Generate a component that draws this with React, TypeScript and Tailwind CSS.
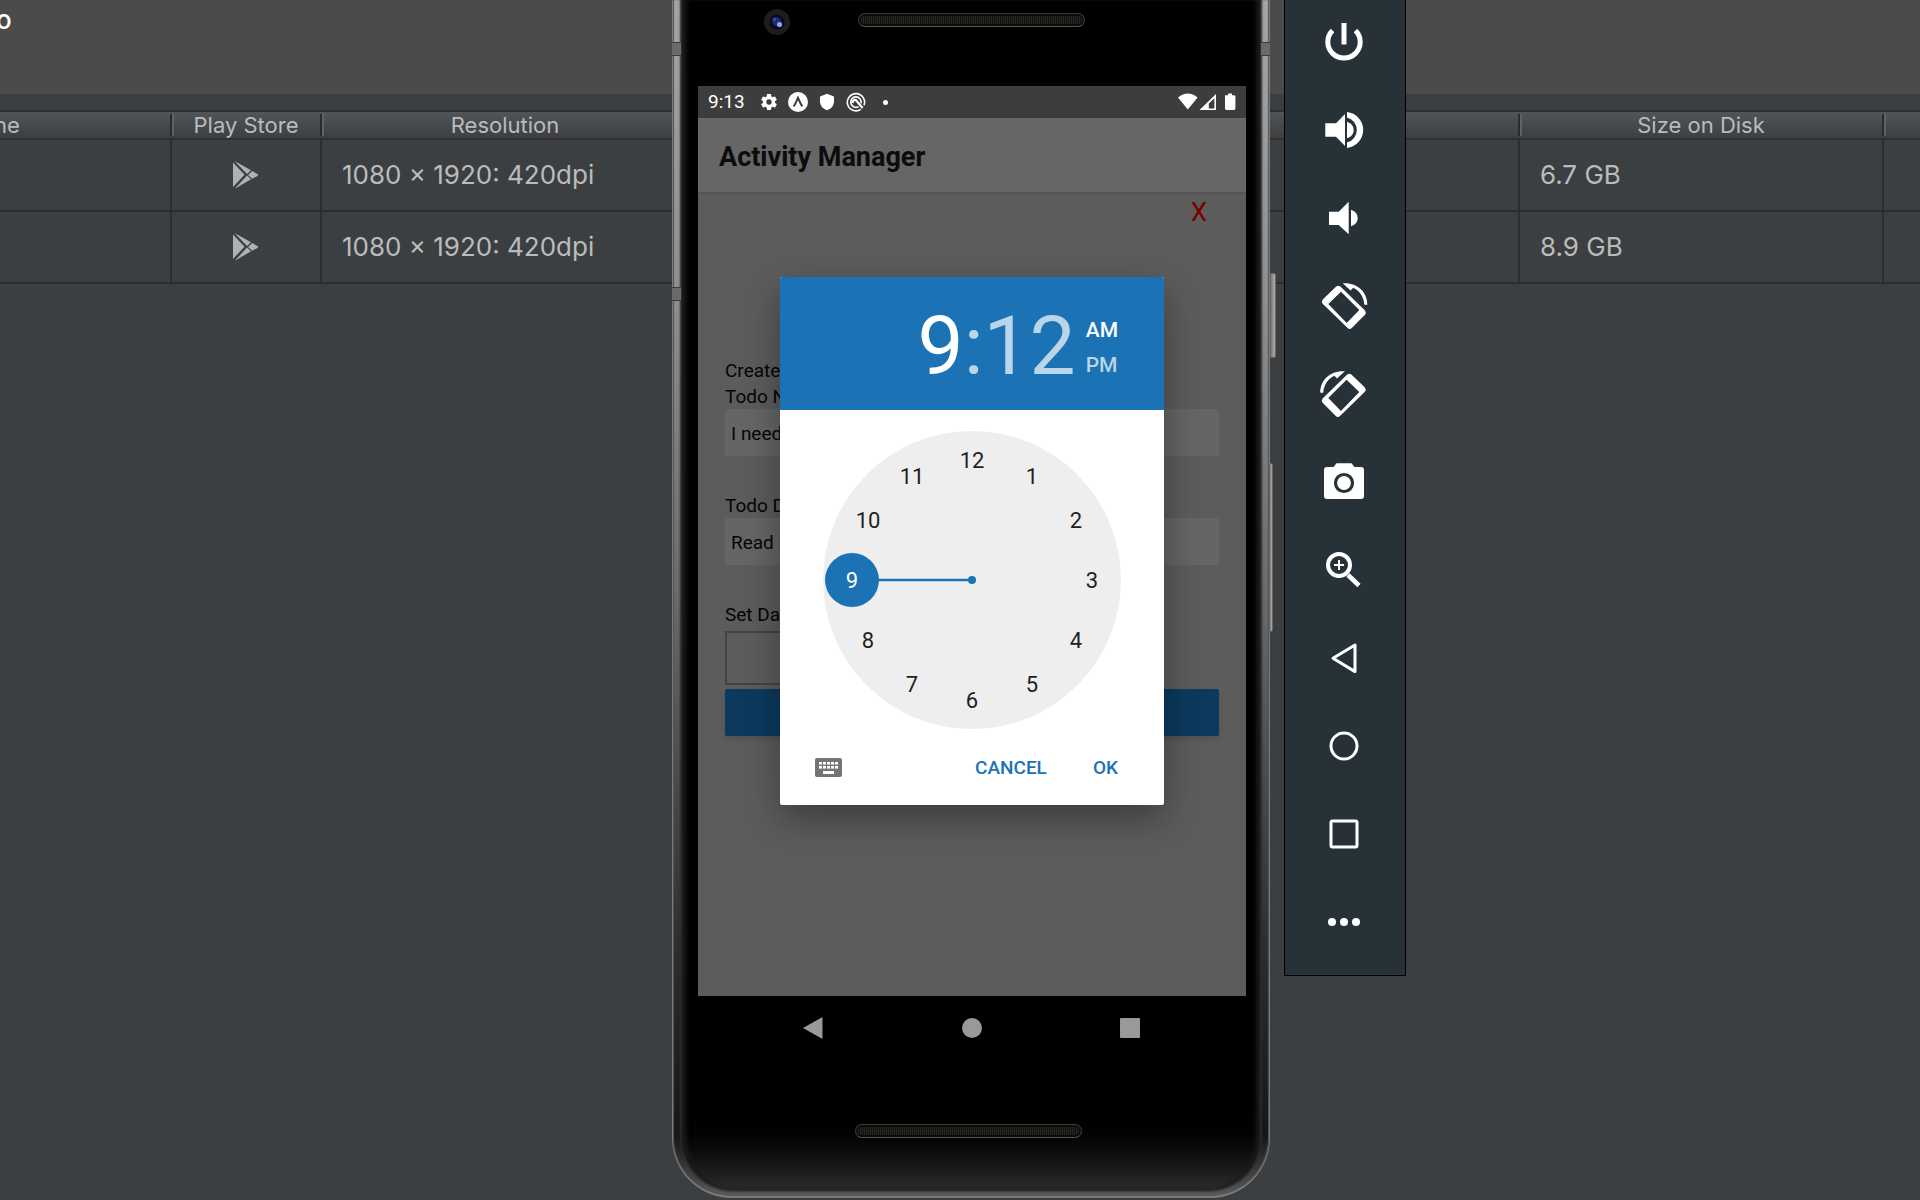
import React from "react";

const BLUE = "#1b72b4";

const devices = [
  { resolution: "1080 × 1920: 420dpi", size: "6.7 GB" },
  { resolution: "1080 × 1920: 420dpi", size: "8.9 GB" },
];

function PlayStoreIcon() {
  return (
    <svg width="28" height="28" viewBox="0 0 28 28" className="mx-auto" fill="#afb1b3" aria-label="Play Store available">
      <path d="M1 1.5 L12.5 13.7 L1 26 Z" />
      <path d="M2.5 0 L19 9.3 L15 13 Z" />
      <path d="M2.5 28 L19 18.3 L15 14.6 Z" />
      <path d="M20.2 10.1 L25.5 13.1 Q26.7 14 25.5 14.9 L20.2 17.7 L16 13.9 Z" />
    </svg>
  );
}

function HeaderCell({ children, last }: { children?: React.ReactNode; last?: boolean }) {
  return (
    <th scope="col" className="border-y-2 border-[#2f3133] p-0 font-normal">
      <div className="flex h-[26px] items-center">
        <div className="flex-1 overflow-hidden text-center text-[22px] leading-[26px] whitespace-nowrap">{children}</div>
        {!last && <span className="-mr-0.5 h-[22px] w-1 border-x-2 border-l-[#2b2b2b] border-r-[#5f6366]" />}
      </div>
    </th>
  );
}

function DeviceTable() {
  return (
    <table className="w-full table-fixed border-separate border-spacing-0 text-[#bbbbbb]">
      <colgroup>
        <col className="w-[172px]" />
        <col className="w-[150px]" />
        <col className="w-[368px]" />
        <col />
        <col className="w-[364px]" />
        <col className="w-[36px]" />
      </colgroup>
      <thead>
        <tr className="bg-linear-to-b from-[#53575a] to-[#3b3d3f]">
          <HeaderCell>
            <span className="-ml-1.5 block text-left">ne</span>
          </HeaderCell>
          <HeaderCell>Play Store</HeaderCell>
          <HeaderCell>Resolution</HeaderCell>
          <HeaderCell />
          <HeaderCell>Size on Disk</HeaderCell>
          <HeaderCell last />
        </tr>
      </thead>
      <tbody className="[&_td]:h-[72px] [&_td]:border-b-2 [&_td]:border-[#2c2d2e]">
        {devices.map((d) => (
          <tr key={d.size} className="text-[26px] leading-8">
            <td className="border-r-2" />
            <td className="border-r-2">
              <PlayStoreIcon />
            </td>
            <td className="pl-5 whitespace-nowrap">{d.resolution}</td>
            <td className="border-r-2" />
            <td className="border-r-2 pl-5">{d.size}</td>
            <td />
          </tr>
        ))}
      </tbody>
    </table>
  );
}

const rotateShapes = (
  <>
    <path
      fillRule="evenodd"
      d="M2.7 17.6 L16.2 4.5 Q18.3 2.9 20.4 4.5 L45 28.6 Q46.6 30.7 45 32.8 L31.8 46 Q29.7 47.8 27.6 46 L2.7 21.8 Q1.2 19.7 2.7 17.6 Z M8.3 22 L26.7 41 L39.3 28 L21 9.7 Z"
    />
    <path d="M22.7 1.3 C36 0 47.6 9.5 47.3 22.7 H44.4 C43.6 14.6 39.6 8.8 33.2 5.8 L30.6 8.4 Z" />
  </>
);

const tools: { label: string; icon: React.ReactNode }[] = [
  {
    label: "Power",
    icon: (
      <g fill="none" stroke="#fff" strokeWidth="5">
        <path d="M12.5 12.5 A16.2 16.2 0 1 0 35.5 12.5" />
        <path d="M24 5 V26.5" />
      </g>
    ),
  },
  {
    label: "Volume up",
    icon: (
      <>
        <path d="M5.3 17.3 H16 L25 8 V40 L16 30.7 H5.3 Z" />
        <path d="M27 15.7 Q33.7 18 33.7 24 Q33.7 30 27 32.3 Z" />
        <path d="M27 6 A18.1 18.1 0 0 1 27 42 V36.6 A13 13 0 0 0 27 11.4 Z" />
      </>
    ),
  },
  {
    label: "Volume down",
    icon: (
      <>
        <path d="M9 17.7 H18.7 L28.7 7.7 V40.3 L18.7 31 H9 Z" />
        <path d="M31 15.7 Q37.7 18 37.7 24 Q37.7 30 31 32.3 Z" />
      </>
    ),
  },
  { label: "Rotate left", icon: rotateShapes },
  { label: "Rotate right", icon: <g transform="translate(47.6 0) scale(-1 1)">{rotateShapes}</g> },
  {
    label: "Take screenshot",
    icon: (
      <>
        <path d="M7 9 H13.5 L16.5 5.3 H31.5 L34.5 9 H41 Q44 9 44 12 V38 Q44 41 41 41 H7 Q4 41 4 38 V12 Q4 9 7 9 Z" />
        <circle cx="24" cy="25" r="8.5" fill="none" stroke="#263238" strokeWidth="3.2" />
      </>
    ),
  },
  {
    label: "Zoom",
    icon: (
      <g fill="none" stroke="#fff">
        <circle cx="19" cy="19" r="11" strokeWidth="4" />
        <path d="M19 14 V24 M14 19 H24" strokeWidth="2" />
        <path d="M28 29 L39 39.5" strokeWidth="4.5" />
      </g>
    ),
  },
  { label: "Back", icon: <path d="M13 24.3 L35 11 V37.6 Z" fill="none" stroke="#fff" strokeWidth="3" strokeLinejoin="round" /> },
  { label: "Home", icon: <circle cx="24" cy="24" r="13" fill="none" stroke="#fff" strokeWidth="3" /> },
  { label: "Overview", icon: <rect x="11" y="11" width="26" height="26" rx="1.5" fill="none" stroke="#fff" strokeWidth="3" /> },
  {
    label: "More",
    icon: (
      <>
        <circle cx="12" cy="24" r="4" />
        <circle cx="24" cy="24" r="4" />
        <circle cx="36" cy="24" r="4" />
      </>
    ),
  },
];

function EmulatorToolbar() {
  return (
    <div className="absolute -top-[3px] left-[1284px] flex w-[122px] flex-col border border-black bg-[#263238] pr-0.5 pb-[9px]">
      {tools.map((t) => (
        <button key={t.label} type="button" aria-label={t.label} className="flex h-22 items-center justify-center">
          <svg width="48" height="48" viewBox="0 0 48 48" fill="#fff">
            {t.icon}
          </svg>
        </button>
      ))}
    </div>
  );
}

function Speaker() {
  return (
    <div className="flex h-3.5 w-[227px] rounded-full border border-[#3c3c3a] border-b-[#56544f] bg-[#0c0b09] p-0.5">
      <div className="flex-1 rounded-full bg-[repeating-linear-gradient(90deg,#2a2823_0_1px,#12110e_1px_2px)]" />
    </div>
  );
}

function StatusBar() {
  return (
    <div className="flex h-8 items-center bg-[#3d3d3d] pr-2.5 pl-[10px] text-white">
      <span className="w-[46px] text-[19px] leading-8">9:13</span>
      <div className="flex">
        <span className="flex w-[29px] justify-center">
          <svg width="20" height="20" viewBox="0 0 24 24" fill="#fff">
            <path d="M19.14 12.94c.04-.3.06-.61.06-.94 0-.32-.02-.64-.07-.94l2.03-1.58a.49.49 0 0 0 .12-.61l-1.92-3.32a.49.49 0 0 0-.59-.22l-2.39.96c-.5-.38-1.03-.7-1.62-.94l-.36-2.54a.48.48 0 0 0-.48-.41h-3.84c-.24 0-.43.17-.47.41l-.36 2.54c-.59.24-1.13.57-1.62.94l-2.39-.96a.48.48 0 0 0-.59.22L2.74 8.87c-.12.21-.08.47.12.61l2.03 1.58c-.05.3-.09.63-.09.94s.02.64.07.94l-2.03 1.58a.49.49 0 0 0-.12.61l1.92 3.32c.12.22.37.29.59.22l2.39-.96c.5.38 1.03.7 1.62.94l.36 2.54c.05.24.24.41.48.41h3.84c.24 0 .44-.17.47-.41l.36-2.54c.59-.24 1.13-.56 1.62-.94l2.39.96c.22.08.47 0 .59-.22l1.92-3.32a.48.48 0 0 0-.12-.61l-2.01-1.58zM12 15.2a3.2 3.2 0 1 1 0-6.4 3.2 3.2 0 0 1 0 6.4z" />
          </svg>
        </span>
        <span className="flex w-[29px] justify-center">
          <svg width="20" height="20" viewBox="0 0 20 20">
            <circle cx="10" cy="10" r="10" fill="#fff" />
            <path d="M5.6 14.4 C7.6 12.2 8.6 8.6 10 5.8 C11.4 8.6 12.4 12.2 14.4 14.4" fill="none" stroke="#3d3d3d" strokeWidth="2" />
          </svg>
        </span>
        <span className="flex w-[29px] justify-center">
          <svg width="20" height="20" viewBox="0 0 20 20" fill="#fff">
            <path d="M10 1.8 L17 4.4 V9.5 Q17 15.6 10 18.3 Q3 15.6 3 9.5 V4.4 Z" />
          </svg>
        </span>
        <span className="flex w-[29px] justify-center">
          <svg width="20" height="20" viewBox="0 0 20 20" fill="none" stroke="#fff">
            <path d="M14.8 17.3 A8.6 8.6 0 1 1 18 13.2" strokeWidth="1.6" />
            <path d="M12.6 14.6 A5.2 5.2 0 1 1 15 11.4" strokeWidth="1.6" />
            <path d="M6.4 11 Q7 7.4 9.8 8 L16.6 16" strokeWidth="2.2" />
          </svg>
        </span>
        <span className="flex w-[31px] items-center justify-center">
          <span className="size-[5px] rounded-full bg-white" />
        </span>
      </div>
      <svg className="ml-auto" width="58" height="18" viewBox="0 0 58 18" fill="#fff">
        <path d="M0 4.4 Q9.8 -3.4 19.6 4.4 L9.8 16.6 Z" />
        <path fillRule="evenodd" d="M21.5 17 L38 1 V17 Z M30.8 15.5 H36.4 V5.2 L30.8 10.4 Z" />
        <path d="M47 2.2 H50 V0.5 H54 V2.2 H56 Q57.4 2.2 57.4 3.6 V15.6 Q57.4 17 56 17 H48.3 Q47 17 47 15.6 Z" />
      </svg>
    </div>
  );
}

function Field({ id, label, value }: { id: string; label: string; value: string }) {
  return (
    <div className="flex flex-col">
      <label htmlFor={id} className="h-[26px] pt-0.5 leading-6">
        {label}
      </label>
      <input id={id} type="text" defaultValue={value} className="h-[47px] w-full rounded-xs bg-[#656565] px-1.5 pt-0.5 text-[19px] outline-none" />
    </div>
  );
}

function ActivityForm() {
  return (
    <form className="flex flex-col px-[27px] text-[19px] text-[#050505]" onSubmit={(e) => e.preventDefault()}>
      <div className="flex h-[165px] justify-end pr-2">
        <button type="button" aria-label="Close" className="h-10 px-1 text-[26px] text-[#7a0000]">
          X
        </button>
      </div>
      <h2 className="h-[26px] pt-0.5 leading-6">Create Todo</h2>
      <div className="flex flex-col gap-9">
        <Field id="todo-name" label="Todo Name" value="I need to" />
        <Field id="todo-description" label="Todo Description" value="Read Book" />
        <div className="flex flex-col">
          <label htmlFor="todo-date" className="h-[30px] pt-0.5 leading-6">
            Set Date
          </label>
          <input id="todo-date" type="text" className="mb-1 h-[54px] w-1/2 border-2 border-[#434343] bg-transparent outline-none" />
          <button type="submit" aria-label="Add" className="h-[47px] rounded-xs bg-[#0c3a5e] shadow-md" />
        </div>
      </div>
    </form>
  );
}

const hours = [12, 1, 2, 3, 4, 5, 6, 7, 8, 9, 10, 11];

function ClockFace() {
  return (
    <div className="relative mx-auto size-[298px] rounded-full bg-[#eeeeee] text-[22px] text-[#1f1f1f]">
      <svg className="absolute inset-0" width="298" height="298" viewBox="0 0 298 298">
        <circle cx="29" cy="149" r="27" fill={BLUE} />
        <path d="M29 149 H149" stroke={BLUE} strokeWidth="2.6" />
        <circle cx="149" cy="149" r="4" fill={BLUE} />
      </svg>
      {hours.map((h) => {
        const a = (h * Math.PI) / 6;
        return (
          <button
            key={h}
            type="button"
            className={
              h === 9
                ? "absolute flex size-10 -translate-1/2 items-center justify-center text-white"
                : "absolute flex size-10 -translate-1/2 items-center justify-center"
            }
            style={{ left: Math.round(149 + 120 * Math.sin(a)), top: Math.round(149 - 120 * Math.cos(a)) }}
          >
            {h}
          </button>
        );
      })}
    </div>
  );
}

function TimePicker() {
  return (
    <div
      role="dialog"
      aria-label="Pick a time"
      className="absolute top-[191px] left-[82px] flex h-[528px] w-[384px] flex-col overflow-hidden rounded-xs bg-white shadow-[0_14px_36px_rgba(0,0,0,0.35)]"
    >
      <div className="flex h-[133px] items-center justify-end gap-2.5 bg-[#1b72b4] pt-1 pr-[46px] text-[#bbd5e8]">
        <div className="flex text-[82px] leading-[88px]">
          <button type="button" className="text-white">
            9
          </button>
          <span>:</span>
          <button type="button">12</button>
        </div>
        <div className="flex flex-col items-start pt-1 text-[21px] leading-[35px] font-medium">
          <button type="button" className="text-white">
            AM
          </button>
          <button type="button">PM</button>
        </div>
      </div>
      <div className="pt-[21px]">
        <ClockFace />
      </div>
      <div className="flex flex-1 items-center pr-[46px] pl-[35px] text-[19px] font-medium text-[#1b72b4]">
        <button type="button" aria-label="Switch to text input">
          <svg width="27" height="19" viewBox="0 0 27 19">
            <rect width="27" height="19" rx="2" fill="#757575" />
            <g fill="#fff">
              {[4, 8, 12, 16, 20].map((x) => (
                <g key={x}>
                  <rect x={x} y="4" width="3" height="2.6" />
                  <rect x={x} y="8" width="3" height="2.6" />
                </g>
              ))}
              <rect x="8" y="13" width="11" height="3" />
            </g>
          </svg>
        </button>
        <button type="button" className="ml-auto pt-0.5">
          CANCEL
        </button>
        <button type="button" className="ml-[46px] pt-0.5">
          OK
        </button>
      </div>
    </div>
  );
}

function AntennaBand({ className }: { className: string }) {
  return <div className={`absolute h-3.5 w-[9px] border-y border-[#3c3c3c] bg-[#6a6a6a] ${className}`} />;
}

function Phone() {
  return (
    <div className="absolute top-0 left-[672px] w-[604px]">
      <div className="absolute top-[273px] right-0 h-[85px] w-1.5 rounded-r-xs border border-[#666] bg-linear-to-r from-[#777] to-[#b0b0b0]" />
      <div className="absolute top-[463px] right-[3px] h-[169px] w-1 rounded-r-xs border border-[#666] bg-linear-to-r from-[#777] to-[#b0b0b0]" />
      <div className="w-[598px] rounded-b-[60px] border-x border-b-2 border-[#7a7a7a] bg-[linear-gradient(180deg,#a4a4a4_0%,#8e8e8e_25%,#6a6a6a_50%,#2c2c2c_80%,#161616_95%,#5a5a5a_100%)] px-[9px] pb-1.5 shadow-[inset_1px_0_1px_#555,inset_-1px_0_1px_#555]">
        <div className="flex flex-col rounded-b-[52px] bg-linear-to-b from-black from-93% to-[#2c2c2c] shadow-[-1px_0_2px_1px_#2a2a2a,1px_0_2px_1px_#2a2a2a,inset_6px_0_5px_-2px_#1c1c1c,inset_-6px_0_5px_-2px_#1c1c1c]">
          <div className="flex h-[86px] items-start pt-[9px] pl-[82px]">
            <svg width="26" height="26" viewBox="0 0 26 26">
              <circle cx="13" cy="13" r="13" fill="#1e1d1e" />
              <circle cx="13" cy="13" r="7.5" fill="#080a1c" />
              <circle cx="12.5" cy="12.5" r="4.5" fill="#1c2a72" />
              <circle cx="15.5" cy="15.5" r="2.6" fill="#8ba0f0" />
              <circle cx="10.5" cy="10.5" r="1.4" fill="#3c55c0" />
            </svg>
            <div className="mt-1 ml-[68px]">
              <Speaker />
            </div>
          </div>
          <div className="relative mr-[14px] ml-4 flex h-[910px] flex-col bg-[#5c5c5c]">
            <StatusBar />
            <header className="flex h-[74px] items-center bg-[#666666] px-[21px] pt-1 shadow">
              <h1 className="text-[27px] font-bold text-[#0c0c0c]">Activity Manager</h1>
            </header>
            <ActivityForm />
            <TimePicker />
          </div>
          <nav className="mr-[14px] ml-4 flex h-16 items-center justify-between pr-[106px] pl-[105px]">
            <button type="button" aria-label="Back">
              <svg width="20" height="22" viewBox="0 0 20 22" fill="#999">
                <path d="M0 11 L19.5 0 V22 Z" />
              </svg>
            </button>
            <button type="button" aria-label="Home" className="size-5 rounded-full bg-[#999999]" />
            <button type="button" aria-label="Overview" className="size-5 rounded-[1px] bg-[#999999]" />
          </nav>
          <div className="flex h-[130px] justify-center pt-16 pr-1.5">
            <Speaker />
          </div>
        </div>
      </div>
      <AntennaBand className="top-[42px] left-0" />
      <AntennaBand className="top-[42px] right-1.5" />
      <AntennaBand className="top-[287px] left-0" />
    </div>
  );
}

export default function App() {
  return (
    <div className="relative h-[1200px] min-h-screen w-full overflow-hidden bg-[#3c3f41] font-['Roboto',sans-serif]">
      <div className="font-['Inter',sans-serif]">
        <div className="h-[94px] bg-[#4b4b4b]">
          <p className="-ml-1 text-[26px] leading-10 font-medium text-white">o</p>
        </div>
        <div className="h-4" />
        <DeviceTable />
      </div>
      <Phone />
      <EmulatorToolbar />
    </div>
  );
}
